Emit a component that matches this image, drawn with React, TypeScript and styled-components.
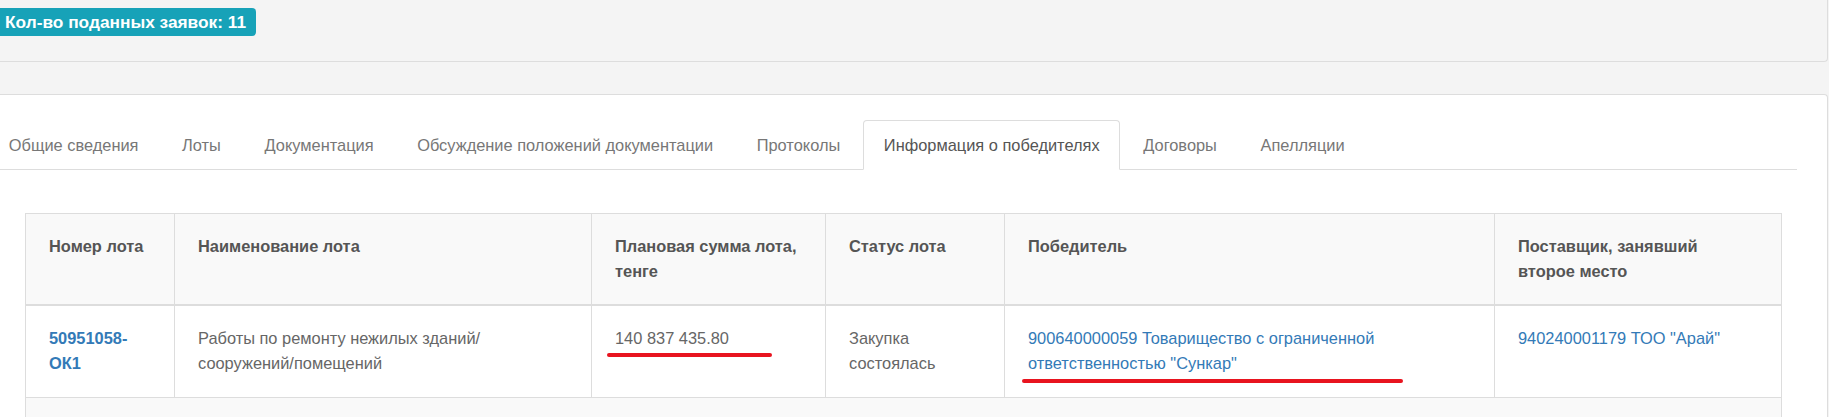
import React from 'react';
import styled, { createGlobalStyle } from 'styled-components';

const GlobalStyle = createGlobalStyle`
  html, body {
    margin: 0;
    padding: 0;
    background: #f4f4f4;
  }
  body {
    font-family: "Liberation Sans", Arial, sans-serif;
    font-size: 16.4px;
    color: #555;
    overflow: hidden;
  }
`;

const Page = styled.div`padding-right: 1px;`;

const TopPanel = styled.div`
  box-sizing: border-box;
  height: 62px;
  padding-top: 8px;
  border-bottom: 1px solid #ddd;
  border-right: 1px solid #ddd;
  border-bottom-right-radius: 4px;
`;

const Badge = styled.span`
  display: inline-block;
  padding: 0 10px 0 5px;
  line-height: 28px;
  font-size: 17.3px;
  font-weight: 700;
  color: #fff;
  background: #17a2b8;
  border-radius: 0 4px 4px 0;
`;

const MainPanel = styled.div`
  margin-top: 32px;
  min-height: 400px;
  padding: 25px 30px 0 0;
  background: #fff;
  border-top: 1px solid #ddd;
  border-right: 1px solid #ddd;
  border-top-right-radius: 4px;
`;

const TabList = styled.ul`
  display: flex;
  margin: 0 0 0 -12px;
  padding: 0;
  list-style: none;
  border-bottom: 1px solid #ddd;
`;

const Tab = styled.li<{ $active?: boolean }>`
  margin: 0 2px -1px 0;
  padding: 12px 19.8px;
  line-height: 24px;
  white-space: nowrap;
  color: ${(p) => (p.$active ? '#555' : '#777')};
  background: ${(p) => (p.$active ? '#fff' : 'transparent')};
  border: 1px solid transparent;
  border-color: ${(p) => (p.$active ? '#ddd #ddd transparent' : 'transparent')};
  border-radius: 4px 4px 0 0;
`;

const TableWrap = styled.div`margin: 43px 15px 0 25px;`;

const Table = styled.table`
  width: 100%;
  table-layout: fixed;
  border-collapse: collapse;
  border: 1px solid #ddd;
`;

const Th = styled.th`
  padding: 20px 23px 21px;
  text-align: left;
  vertical-align: top;
  line-height: 24.5px;
  font-weight: 700;
  color: #555;
  background: #f9f9f9;
  border: 1px solid #ddd;
  border-bottom-width: 2px;
`;

const Td = styled.td`
  padding: 20px 23px 22px;
  vertical-align: top;
  line-height: 24.5px;
  color: #666;
  border: 1px solid #ddd;
`;

const StripeTd = styled.td`
  height: 40px;
  background: #f9f9f9;
  border: 1px solid #ddd;
`;

const LotLink = styled.a`
  color: #337ab7;
  font-weight: 700;
  text-decoration: none;
`;

const Link = styled.a`
  color: #337ab7;
  text-decoration: none;
`;

const Marked = styled.div`position: relative;`;

const Mark = styled.span<{ $left: number; $width: number; $gap: number }>`
  position: absolute;
  left: ${(p) => p.$left}px;
  top: calc(100% + ${(p) => p.$gap}px);
  width: ${(p) => p.$width}px;
  height: 4px;
  border-radius: 2px;
  background: #e8141f;
`;

const tabs = [
  'Общие сведения',
  'Лоты',
  'Документация',
  'Обсуждение положений документации',
  'Протоколы',
  'Информация о победителях',
  'Договоры',
  'Апелляции'
];

const columns = [149, 417, 234, 179, 490];

const App: React.FC = () => (
  <Page>
    <GlobalStyle />
    <TopPanel>
      <Badge>Кол-во поданных заявок: 11</Badge>
    </TopPanel>
    <MainPanel>
      <TabList>
        {tabs.map((t) => (
          <Tab key={t} $active={t === 'Информация о победителях'}>{t}</Tab>
        ))}
      </TabList>
      <TableWrap>
        <Table>
          <colgroup>
            {columns.map((w, i) => <col key={i} style={{ width: w }} />)}
            <col />
          </colgroup>
          <thead>
            <tr>
              <Th>Номер лота</Th>
              <Th>Наименование лота</Th>
              <Th>Плановая сумма лота, тенге</Th>
              <Th>Статус лота</Th>
              <Th>Победитель</Th>
              <Th>Поставщик, занявший второе место</Th>
            </tr>
          </thead>
          <tbody>
            <tr>
              <Td><LotLink href="#">50951058-ОК1</LotLink></Td>
              <Td>Работы по ремонту нежилых зданий/сооружений/помещений</Td>
              <Td>
                <Marked>
                  140 837 435.80
                  <Mark $left={-8} $width={165} $gap={2} />
                </Marked>
              </Td>
              <Td>Закупка состоялась</Td>
              <Td>
                <Marked>
                  <Link href="#">900640000059 Товарищество с ограниченной ответственностью "Сункар"</Link>
                  <Mark $left={-6} $width={381} $gap={4} />
                </Marked>
              </Td>
              <Td><Link href="#">940240001179 ТОО "Арай"</Link></Td>
            </tr>
            <tr>
              <StripeTd colSpan={6} />
            </tr>
          </tbody>
        </Table>
      </TableWrap>
    </MainPanel>
  </Page>
);

export default App;
